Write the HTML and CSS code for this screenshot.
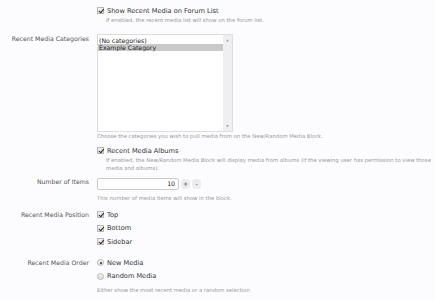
FILE: index.html
```html
<!DOCTYPE html>
<html lang="en">
  <head>
    <meta charset="UTF-8" />
    <title>Media options</title>
    <link rel="stylesheet" href="styles.css">
  </head>
  <body>
    <div class="options">
      <div class="row row-first">
        <div class="label"></div>
        <div class="field">
          <label class="check"><span class="box on"></span>Show Recent Media on Forum List</label>
          <p class="hint indent">If enabled, the recent media list will show on the forum list.</p>
        </div>
      </div>

      <div class="row row-cats">
        <div class="label">Recent Media Categories</div>
        <div class="field">
          <div class="listbox">
            <div class="items">
              <div class="item">(No categories)</div>
              <div class="item selected">Example Category</div>
            </div>
            <div class="scroll"><span>&#9650;</span><span>&#9660;</span></div>
          </div>
          <p class="hint">Choose the categories you wish to pull media from on the New/Random Media Block.</p>
        </div>
      </div>

      <div class="row row-albums">
        <div class="label"></div>
        <div class="field">
          <label class="check"><span class="box on"></span>Recent Media Albums</label>
          <p class="hint indent">If enabled, the New/Random Media Block will display media from albums (if the viewing user has permission to view those media and albums).</p>
        </div>
      </div>

      <div class="row row-number">
        <div class="label">Number of Items</div>
        <div class="field">
          <div class="spin">
            <div class="number">10</div>
            <span class="spin-btn">+</span>
            <span class="spin-btn">-</span>
          </div>
          <p class="hint hint-gap">This number of media items will show in the block.</p>
        </div>
      </div>

      <div class="row row-position">
        <div class="label">Recent Media Position</div>
        <div class="field list">
          <label class="check"><span class="box on"></span>Top</label>
          <label class="check"><span class="box on"></span>Bottom</label>
          <label class="check"><span class="box on"></span>Sidebar</label>
        </div>
      </div>

      <div class="row row-order">
        <div class="label">Recent Media Order</div>
        <div class="field">
          <div class="list">
            <label class="check"><span class="radio on"></span>New Media</label>
            <label class="check"><span class="radio"></span>Random Media</label>
          </div>
          <p class="hint hint-list">Either show the most recent media or a random selection</p>
        </div>
      </div>
    </div>
  </body>
</html>
```

FILE: styles.css
```css
* {
  padding: 0px;
  margin: 0px;
  box-sizing: border-box;
}

body {
  background-color: #fcfcfe;
  font-family: "DejaVu Sans", sans-serif;
  font-size: 6.2px;
  color: #333;
}

.options {
  padding-top: 6px;
  display: flex;
  flex-direction: column;
}

.row {
  display: grid;
  grid-template-columns: 89px 1fr;
  column-gap: 8px;
}

.label {
  text-align: right;
  color: #555;
  line-height: 9px;
}

.check {
  display: flex;
  align-items: center;
  gap: 3px;
  height: 9px;
  color: #333;
  font-size: 6.6px;
}

.box,
.radio {
  width: 7px;
  height: 7px;
  border: 1px solid #b8b8b8;
  background: linear-gradient(#f4f4f4, #dcdcdc);
  position: relative;
  flex-shrink: 0;
}

.box.on::after {
  content: "";
  position: absolute;
  left: 1.5px;
  top: 0px;
  width: 2px;
  height: 3.5px;
  border-right: 1px solid #222;
  border-bottom: 1px solid #222;
  transform: rotate(40deg);
}

.radio {
  border-radius: 50%;
}

.radio.on::after {
  content: "";
  position: absolute;
  left: 1.5px;
  top: 1.5px;
  width: 2px;
  height: 2px;
  border-radius: 50%;
  background: #333;
}

.hint {
  font-size: 5.3px;
  color: #999;
  line-height: 8px;
}

.indent {
  padding-left: 9px;
  margin-top: 1px;
}

.hint-gap {
  margin-top: 4px;
}

.hint-list {
  margin-top: 5px;
}

.row-cats {
  margin-top: 10px;
}

.listbox {
  width: 136px;
  height: 98px;
  border: 1px solid #ddd;
  background: #fff;
  display: flex;
}

.items {
  flex: 1;
  padding-top: 2px;
}

.item {
  height: 7px;
  line-height: 7px;
  padding-left: 1px;
  color: #222;
}

.item.selected {
  background: #c9c9c9;
}

.scroll {
  width: 9px;
  background: #efeff1;
  display: flex;
  flex-direction: column;
  justify-content: space-between;
  align-items: center;
  font-size: 3px;
  color: #999;
  padding: 3px 0;
}

.row-albums {
  margin-top: 6px;
}

.row-number {
  margin-top: 5px;
}

.spin {
  display: flex;
  align-items: center;
  gap: 2px;
  height: 13px;
}

.number {
  width: 82px;
  height: 12px;
  border: 1px solid #ccc;
  border-radius: 2px;
  background: #fff;
  text-align: right;
  padding-right: 3px;
  line-height: 10px;
  color: #222;
}

.spin-btn {
  width: 9px;
  height: 10px;
  border-radius: 4px;
  background: #ececf0;
  color: #444;
  text-align: center;
  line-height: 10px;
}

.row-position {
  margin-top: 8px;
}

.list {
  display: flex;
  flex-direction: column;
  gap: 4.5px;
}

.row-order {
  margin-top: 12px;
}
```
